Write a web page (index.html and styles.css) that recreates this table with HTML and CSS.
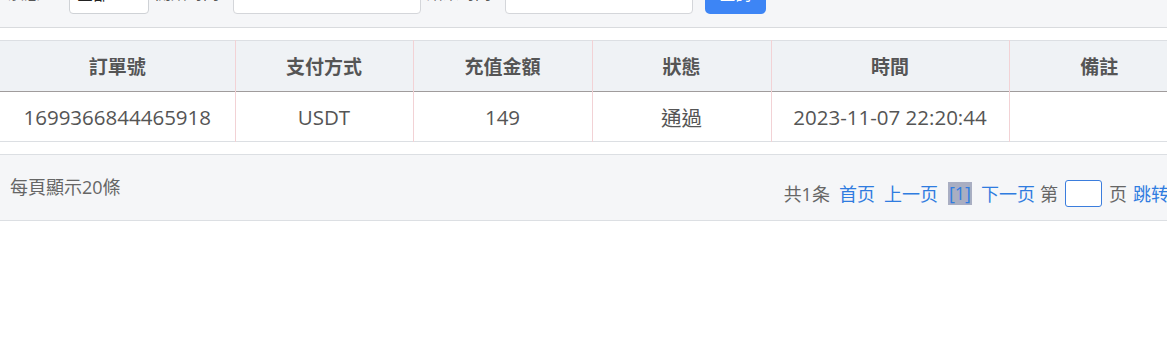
FILE: index.html
```html
<!DOCTYPE html>
<html lang="zh-Hant">
<head>
<meta charset="utf-8">
<title>充值記錄</title>
<link rel="stylesheet" href="styles.css">
</head>
<body>
<div class="page">
  <form class="filter">
    <label class="flabel lbl1">狀態</label>
    <div class="select">全部</div>
    <label class="flabel lbl2">開始時間</label>
    <input class="finput" type="text">
    <label class="flabel lbl3">結束時間</label>
    <input class="finput" type="text">
    <button class="btn" type="button">查詢</button>
  </form>

  <table class="grid">
    <colgroup>
      <col class="c1"><col class="c2"><col class="c3"><col class="c4"><col class="c5"><col class="c6">
    </colgroup>
    <thead>
      <tr><th>訂單號</th><th>支付方式</th><th>充值金額</th><th>狀態</th><th>時間</th><th>備註</th></tr>
    </thead>
    <tbody>
      <tr><td>1699366844465918</td><td>USDT</td><td>149</td><td>通過</td><td>2023-11-07 22:20:44</td><td></td></tr>
    </tbody>
  </table>

  <div class="pager">
    <div class="per">每頁顯示20條</div>
    <div class="nav">
      <span class="total">共1条</span>
      <a class="lnk first">首页</a>
      <a class="lnk prev">上一页</a>
      <span class="cur">[1]</span>
      <a class="lnk next">下一页</a>
      <span class="txt di">第</span>
      <span class="pbox"></span>
      <span class="txt ye">页</span>
      <a class="lnk go">跳转</a>
    </div>
  </div>
</div>
</body>
</html>
```

FILE: styles.css
```css
html, body {
  margin: 0;
  padding: 0;
  overflow: hidden;
  background: #fff;
}
body {
  font-family: "Open Sans", "Noto Sans CJK TC", sans-serif;
  color: #555;
}
.page {
  width: 1189px;
}
.filter {
  margin-top: -34px;
  height: 62px;
  box-sizing: border-box;
  background: #f5f6f8;
  border-bottom: 1px solid #d9dbde;
  display: flex;
  align-items: center;
  padding: 0 0 0 8px;
}
.flabel {
  font-size: 16px;
  color: #555;
  line-height: 20px;
  margin-bottom: 7px;
}
.lbl1 { width: 61px; }
.lbl2 { margin-left: 6px; width: 78px; }
.lbl3 { margin-left: 6px; width: 78px; }
.select {
  width: 80px;
  height: 34px;
  box-sizing: border-box;
  border: 1px solid #cfd2d6;
  border-radius: 4px;
  background: #fff;
  font-size: 16px;
  line-height: 27px;
  padding-left: 7px;
  color: #222;
}
.finput {
  width: 188px;
  height: 34px;
  box-sizing: border-box;
  border: 1px solid #d4d6da;
  border-radius: 4px;
  background: #fff;
  padding: 0;
  margin: 0;
}
.btn {
  margin-left: 12px;
  width: 61px;
  height: 34px;
  border: 0;
  border-radius: 5px;
  background: #3d85f5;
  color: #fff;
  font-family: inherit;
  font-size: 16px;
  line-height: 24px;
  padding: 0 0 6px;
}

.grid {
  margin-top: 12px;
  width: 1189px;
  border-collapse: collapse;
  table-layout: fixed;
}
.c1 { width: 235px; }
.c2 { width: 178px; }
.c3 { width: 179px; }
.c4 { width: 179px; }
.c5 { width: 238px; }
.c6 { width: 180px; }
.grid th, .grid td {
  text-align: center;
  padding: 0;
  border-left: 1px solid #f2d2d5;
}
.grid th:first-child, .grid td:first-child { border-left: 0; }
.grid thead tr {
  background: #eff2f5;
  border-top: 1px solid #dcdfe3;
  border-bottom: 1px solid #a09c9c;
}
.grid th {
  height: 50px;
  font-size: 19px;
  font-weight: bold;
  color: #555;
}
.grid td {
  height: 49px;
  font-size: 20.5px;
  color: #555;
}
.grid tbody tr {
  border-bottom: 1px solid #dcdfe3;
}

.pager {
  margin-top: 12px;
  height: 67px;
  box-sizing: border-box;
  background: #f5f6f8;
  border-top: 1px solid #dcdfe3;
  border-bottom: 1px solid #dcdfe3;
  display: flex;
  justify-content: space-between;
  align-items: flex-start;
  padding: 0 20px 0 10px;
  font-size: 18px;
}
.per {
  margin-top: 20px;
  line-height: 24px;
  color: #666;
}
.nav {
  margin-top: 25px;
  display: flex;
  align-items: center;
  line-height: 24px;
}
.total { color: #666; }
.lnk { color: #2f7ce0; cursor: pointer; }
.txt { color: #666; }
.first { margin-left: 9px; }
.prev { margin-left: 9px; }
.cur {
  margin-left: 10px;
  background: #a9aec2;
  color: #2f7ce0;
  padding: 0 1px;
  line-height: 23px;
}
.next { margin-left: 9px; }
.di { margin-left: 5px; }
.pbox {
  margin-left: 7px;
  width: 37px;
  height: 27px;
  box-sizing: border-box;
  border: 1px solid #3b7ddd;
  border-radius: 3px;
  background: #fff;
}
.ye { margin-left: 7px; }
.go { margin-left: 6px; }
```
